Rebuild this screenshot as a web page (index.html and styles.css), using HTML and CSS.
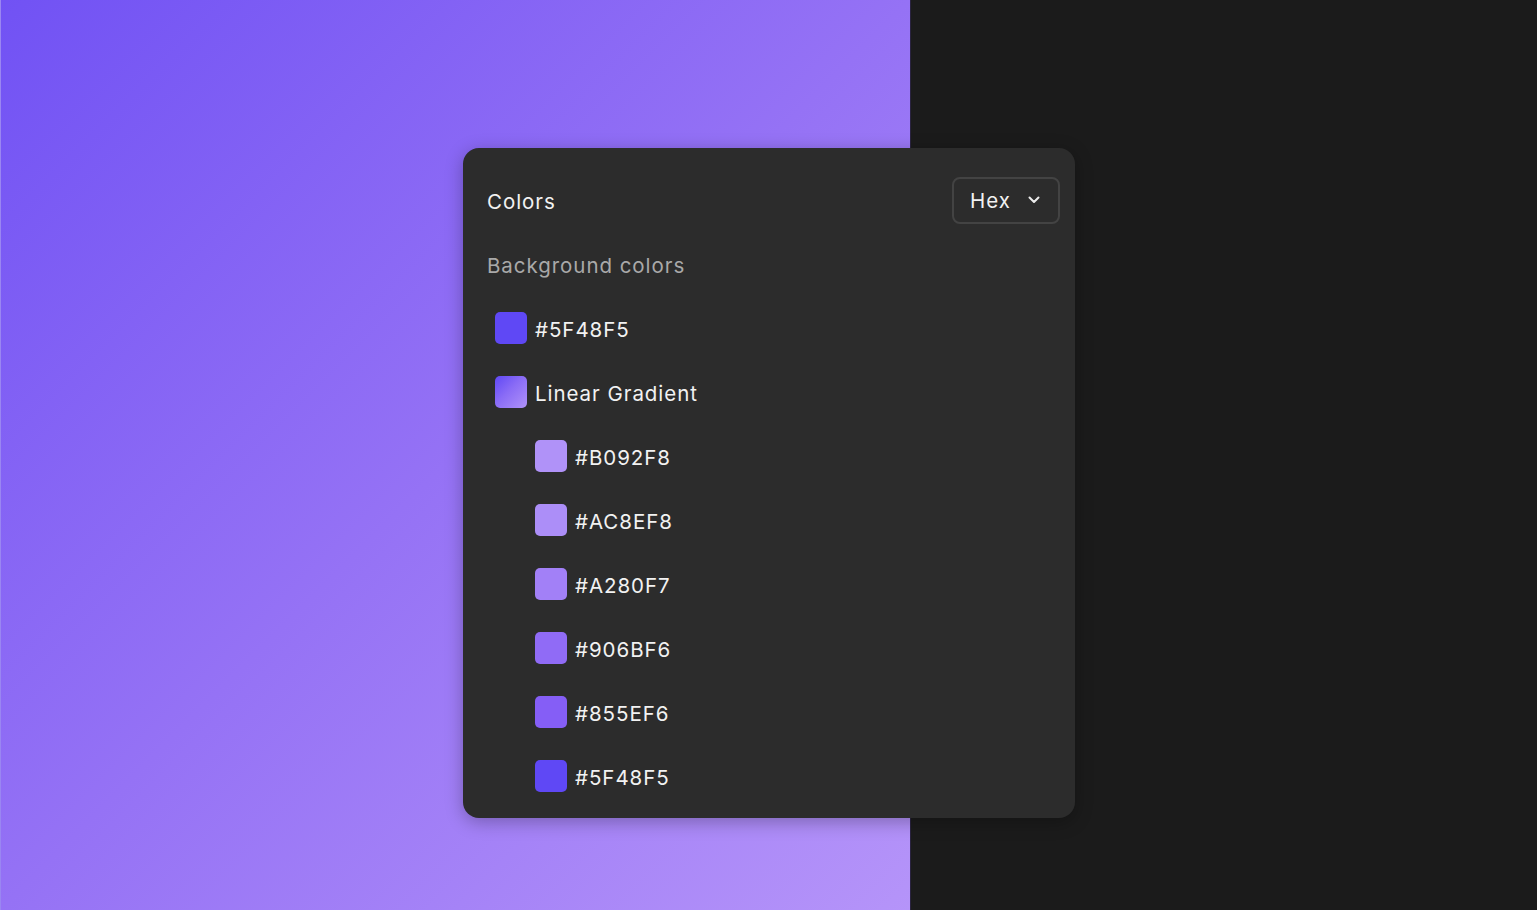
FILE: index.html
```html
<!DOCTYPE html>
<html lang="en">
<head>
  <meta charset="UTF-8">
  <title>Colors</title>
  <link rel="stylesheet" href="styles.css">
</head>
<body>
  <div class="stage">
    <div class="canvas"></div>
    <div class="side"></div>

    <div class="panel">
      <div class="panel-head">
        <span class="title">Colors</span>
        <button class="format">
          <span>Hex</span>
          <svg width="12" height="8" viewBox="0 0 12 8"><path d="M1.5 1.5 L6 6 L10.5 1.5" fill="none" stroke="#ececec" stroke-width="2" stroke-linecap="round" stroke-linejoin="round"/></svg>
        </button>
      </div>

      <div class="subhead">Background colors</div>

      <ul class="swatches">
        <li class="row"><span class="chip" style="background:#5F48F5"></span>#5F48F5</li>
        <li class="row"><span class="chip chip-gradient"></span>Linear Gradient</li>
        <li class="row nested"><span class="chip" style="background:#B092F8"></span>#B092F8</li>
        <li class="row nested"><span class="chip" style="background:#AC8EF8"></span>#AC8EF8</li>
        <li class="row nested"><span class="chip" style="background:#A280F7"></span>#A280F7</li>
        <li class="row nested"><span class="chip" style="background:#906BF6"></span>#906BF6</li>
        <li class="row nested"><span class="chip" style="background:#855EF6"></span>#855EF6</li>
        <li class="row nested"><span class="chip" style="background:#5F48F5"></span>#5F48F5</li>
      </ul>
    </div>
  </div>
</body>
</html>
```

FILE: styles.css
```css
html, body { margin: 0; height: 100%; }
body { font-family: Inter, "Noto Sans", sans-serif; background: #1b1b1b; overflow: hidden; }

.stage { position: relative; display: flex; height: 910px; }
.canvas {
  width: 909px;
  border-left: 1px solid #9a86f2;
  background: linear-gradient(135deg, #7152f4 0%, #9572f5 50%, #b594f9 100%);
}
.side { flex: 1; background: #1b1b1b; border-left: 1px solid #2a2340; }

.panel {
  position: absolute;
  left: 463px;
  top: 148px;
  width: 612px;
  height: 670px;
  box-sizing: border-box;
  padding: 21px 15px 9px 24px;
  background: #2c2c2c;
  border-radius: 16px;
  box-shadow: 0 4px 18px rgba(0, 0, 0, 0.28);
  color: #f2f2f2;
  font-size: 20.5px;
  letter-spacing: 0.95px;
}

.panel-head {
  display: flex;
  align-items: center;
  justify-content: space-between;
  height: 64px;
}

.format {
  display: flex;
  align-items: center;
  justify-content: space-between;
  height: 47px;
  width: 108px;
  box-sizing: border-box;
  margin-top: -2px;
  padding: 0 18px 0 16px;
  background: transparent;
  border: 2px solid #434343;
  border-radius: 8px;
  color: #f2f2f2;
  font-family: inherit;
  font-size: 20.5px;
  letter-spacing: 0.95px;
}

.subhead {
  display: flex;
  align-items: center;
  height: 64px;
  color: #a9a9a9;
}

.swatches { list-style: none; margin: 0; padding: 0; }
.row {
  display: flex;
  align-items: center;
  gap: 8px;
  height: 64px;
  padding-left: 8px;
}
.row.nested { padding-left: 48px; }

.chip {
  width: 32px;
  height: 32px;
  border-radius: 5px;
  flex-shrink: 0;
  margin-top: -2px;
}
.chip-gradient { background: linear-gradient(135deg, #5f48f5 0%, #8a6cf6 45%, #b092f8 100%); }
```
